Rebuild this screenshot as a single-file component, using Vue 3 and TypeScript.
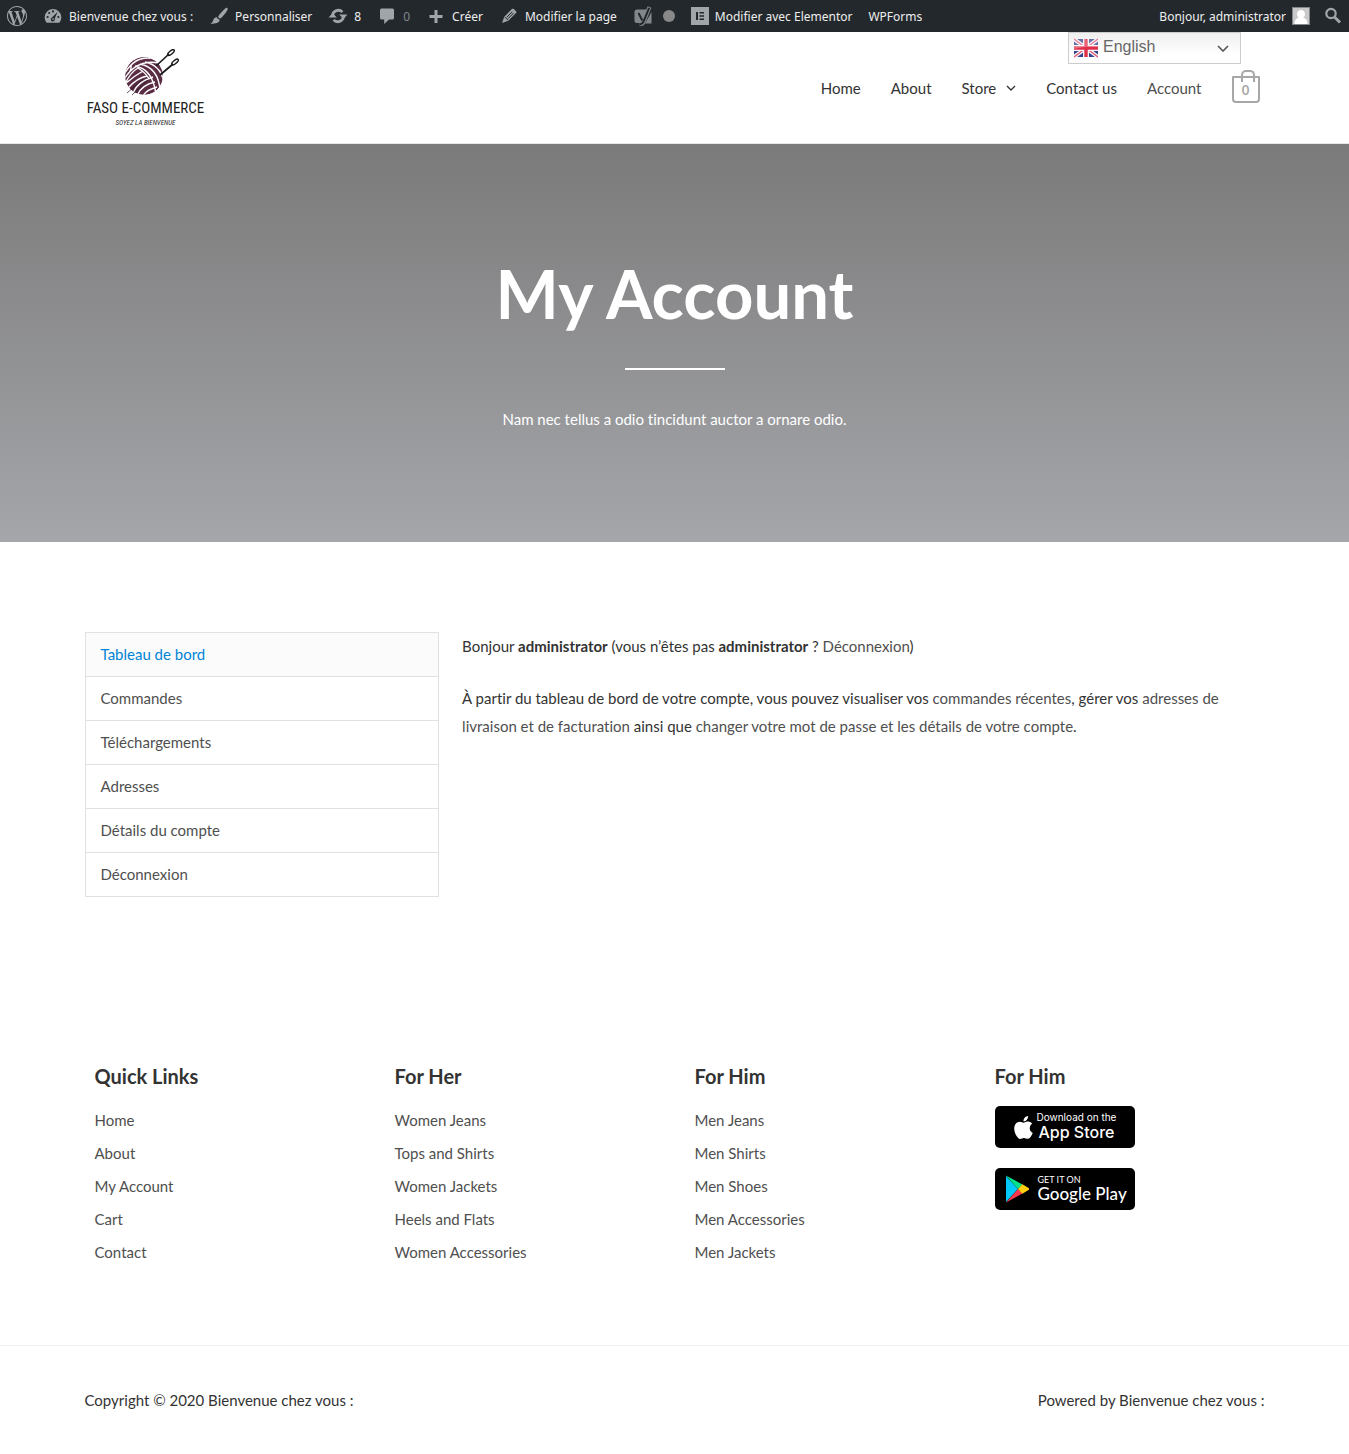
<script setup lang="ts">
interface FooterColumn {
  title: string
  links: string[]
}

const accountLinks: string[] = [
  'Tableau de bord',
  'Commandes',
  'Téléchargements',
  'Adresses',
  'Détails du compte',
  'Déconnexion',
]

const footerColumns: FooterColumn[] = [
  { title: 'Quick Links', links: ['Home', 'About', 'My Account', 'Cart', 'Contact'] },
  { title: 'For Her', links: ['Women Jeans', 'Tops and Shirts', 'Women Jackets', 'Heels and Flats', 'Women Accessories'] },
  { title: 'For Him', links: ['Men Jeans', 'Men Shirts', 'Men Shoes', 'Men Accessories', 'Men Jackets'] },
]
</script>

<template>
  <div class="page">
    <nav class="adminbar" aria-label="Administration">
      <div class="group">
        <a href="#" class="wp" aria-label="WordPress">
          <svg width="20" height="20" viewBox="0 0 24 24" fill="currentColor"><path d="M21.469 6.825c.84 1.537 1.318 3.3 1.318 5.175 0 3.979-2.156 7.456-5.363 9.325l3.295-9.527c.615-1.54.82-2.771.82-3.864 0-.405-.026-.78-.07-1.11m-7.981.105c.647-.03 1.232-.105 1.232-.105.582-.075.514-.93-.067-.899 0 0-1.755.135-2.88.135-1.064 0-2.85-.15-2.85-.15-.585-.03-.661.855-.075.885 0 0 .54.061 1.125.09l1.68 4.605-2.37 7.08L5.354 6.9c.649-.03 1.234-.1 1.234-.1.585-.075.516-.93-.065-.896 0 0-1.746.138-2.874.138-.2 0-.438-.008-.69-.015C4.911 3.15 8.235 1.215 12 1.215c2.809 0 5.365 1.072 7.286 2.833-.046-.003-.091-.009-.141-.009-1.06 0-1.812.923-1.812 1.914 0 .89.513 1.643 1.06 2.531.411.72.89 1.643.89 2.977 0 .915-.354 1.994-.821 3.479l-1.075 3.585-3.9-11.61.001.014zM12 22.784c-1.059 0-2.081-.153-3.048-.437l3.237-9.406 3.315 9.087c.024.053.05.101.078.149-1.12.393-2.325.609-3.582.609M1.211 12c0-1.564.336-3.05.935-4.39L7.29 21.709C3.694 19.96 1.212 16.271 1.211 12M12 0C5.385 0 0 5.385 0 12s5.385 12 12 12 12-5.385 12-12S18.615 0 12 0" /></svg>
        </a>
        <a href="#">
          <svg width="20" height="20" viewBox="0 0 20 20"><path fill="currentColor" d="M3.4 16.4A8.3 8.3 0 1 1 16.6 16.4C15.6 16.8 4.4 16.8 3.4 16.4Z" /><g fill="#23282d"><circle cx="10" cy="5.4" r="1.1" /><circle cx="6.2" cy="7" r="1.1" /><circle cx="4.6" cy="11" r="1.1" /><circle cx="15.4" cy="11" r="1.1" /><path d="M14.6 5.8 11.8 12.6A2.1 2.1 0 1 1 9 11.4Z" /></g><circle cx="10" cy="13.1" r=".9" fill="currentColor" /></svg>
          <span>Bienvenue chez vous :</span>
        </a>
        <a href="#">
          <svg width="20" height="20" viewBox="0 0 20 20" fill="currentColor"><path d="M18.3 2.1c.7.600.5 1.500-.3 2.700-1.500 2.300-4.200 5.700-5.800 7.100-.8.700-1.600.600-2.300 0s-.9-1.500-.1-2.500c1.500-2 4.200-5 6.100-6.600 1.100-.9 1.900-1.200 2.400-.7zM8 11.200c.3 1.300 1.100 2.100 2.600 2.400.2 2.900-3.600 4.800-9.300 4 1.800-.5 2.300-1.600 2.900-3.300.6-2 1.900-3.200 3.800-3.100z" /></svg>
          <span>Personnaliser</span>
        </a>
        <a href="#">
          <svg width="20" height="20" viewBox="0 0 20 20"><path fill="none" stroke="currentColor" stroke-width="2.800" d="M4.600 9.500A5.600 5.600 0 0 1 14.400 6.200M15.400 10.500A5.600 5.600 0 0 1 5.600 13.800" /><path fill="currentColor" d="M11.200 8.600h8.200l-4 4.400zM8.800 11.400H.6l4-4.400z" /></svg>
          <span>8</span>
        </a>
        <a href="#" class="muted">
          <svg width="20" height="20" viewBox="0 0 20 20" fill="currentColor"><path d="M4.500 2.500h11a1.500 1.500 0 0 1 1.500 1.500v8a1.500 1.500 0 0 1-1.500 1.500H12L7.200 18v-4.500H4.500A1.500 1.500 0 0 1 3 12V4a1.500 1.500 0 0 1 1.500-1.500z" /></svg>
          <span>0</span>
        </a>
        <a href="#">
          <svg width="20" height="20" viewBox="0 0 20 20" fill="currentColor"><path d="M8.500 4h3v5h5v3h-5v5h-3v-5h-5V9h5z" /></svg>
          <span>Créer</span>
        </a>
        <a href="#">
          <svg width="20" height="20" viewBox="0 0 20 20"><path fill="currentColor" d="M12.900 3c.5-.5 1.300-.5 1.800 0l2.300 2.300c.5.500.5 1.300 0 1.800L9.300 14.700 3 17l2.300-6.300z" /><path fill="none" stroke="#23282d" stroke-width="1" d="M7.700 11.300 13.300 5.700M9 12.700 14.600 7M6 11.200l3 3" /></svg>
          <span>Modifier la page</span>
        </a>
        <a href="#" class="seo" aria-label="SEO">
          <svg width="20" height="20" viewBox="0 0 20 20"><path fill="#82878c" d="M4 3.500h10.500L9.500 17H4a2.500 2.500 0 0 1-2.500-2.500V6A2.500 2.500 0 0 1 4 3.500zM18.500 6v11.500H12z" /><path fill="none" stroke="#82878c" stroke-width="4" d="M16.500 1 10.800 15.600Q9.600 18.400 6.500 18.400" /><path fill="none" stroke="#23282d" stroke-width="2" d="M5.500 7 9.300 14.500M16.200 1.800 10.600 15.400Q9.500 18.200 6.500 18.400" /></svg>
          <i class="dot"></i>
        </a>
        <a href="#" class="elementor">
          <svg width="18" height="18" viewBox="0 0 18 18"><path fill="currentColor" d="M0 0h18v18H0z" /><path fill="#23282d" d="M5 5h2v8H5zM8.500 5H13v1.500H8.500zM8.500 8.200H13v1.500H8.500zM8.500 11.500H13V13H8.500z" /></svg>
          <span>Modifier avec Elementor</span>
        </a>
        <a href="#"><span>WPForms</span></a>
      </div>
      <div class="group account-tools">
        <a href="#" class="user">
          <span>Bonjour, administrator</span>
          <svg width="18" height="18" viewBox="0 0 18 18"><path fill="#82878c" d="M0 0h18v18H0z" /><path fill="#c9c9c9" d="M1 1h16v16H1z" /><path fill="#fff" d="M9 3c2.500 0 4 1.700 4 4 0 1.500-.8 3-1.800 3.800 2.800.6 4 2.200 4.300 6.200h-13c.3-4 1.500-5.600 4.300-6.200C5.800 10 5 8.500 5 7c0-2.300 1.500-4 4-4z" /></svg>
        </a>
        <a href="#" aria-label="Rechercher">
          <svg width="20" height="20" viewBox="0 0 20 20" fill="none" stroke="currentColor"><circle cx="8" cy="7.500" r="4.700" stroke-width="2.200" /><path stroke-width="3" d="m11.500 11 5.500 5.500" /></svg>
        </a>
      </div>
    </nav>

    <header class="header">
      <div class="container header-row">
        <a href="#" class="logo">
          <svg width="58" height="48" viewBox="0 0 58 48">
            <defs><clipPath id="ball"><circle cx="21" cy="27" r="19" /></clipPath></defs>
            <g clip-path="url(#ball)">
              <circle cx="21" cy="27" r="19" fill="#5a2d45" />
              <g fill="none" stroke="#fff" stroke-width="1.400">
                <path d="M2 24Q13 5 32 10M2 29Q14 10 36 14M12 17Q30 20 33 46M17 15Q36 19 37 42M22 13Q38 16 41 34M3 33Q8 23 15 19Q23 24 26 30M2 35Q11 27 20 22M5 39Q14 29 24 27M14 47Q18 36 32 33M20 47Q23 41 34 38M10 44Q14 33 30 28M8 16Q9 22 3 27" />
              </g>
            </g>
            <path fill="none" stroke="#1c1a1c" stroke-width="1.700" d="M33 17 46 5M37 26 50 15" />
            <path fill="none" stroke="#1c1a1c" stroke-width=".7" d="M4 44 20 30M9 46 25 31" />
            <ellipse cx="48" cy="3.500" rx="4" ry="1.600" transform="rotate(-40 48 3.500)" fill="none" stroke="#1c1a1c" stroke-width="1.500" />
            <ellipse cx="52" cy="13" rx="4" ry="1.600" transform="rotate(-40 52 13)" fill="none" stroke="#1c1a1c" stroke-width="1.500" />
          </svg>
          <span class="logo-name">FASO E-COMMERCE</span>
          <span class="logo-tag">SOYEZ LA BIENVENUE</span>
        </a>
        <nav class="menu" aria-label="Menu principal">
          <a href="#">Home</a>
          <a href="#">About</a>
          <a href="#" class="has-sub">Store
            <svg width="10" height="6" viewBox="0 0 10 6" fill="none" stroke="currentColor" stroke-width="1.300"><path d="m1 1 4 4 4-4" /></svg>
          </a>
          <a href="#">Contact us</a>
          <a href="#" class="current">Account</a>
          <a href="#" class="cart" aria-label="Panier"><span>0</span></a>
        </nav>
      </div>
      <button type="button" class="lang">
        <svg width="24" height="24" viewBox="0 0 24 24">
          <path fill="#33418c" d="M0 3h24v18H0z" />
          <path fill="none" stroke="#f3f0f5" stroke-width="4" d="m0 3 24 18M24 3 0 21" />
          <path fill="none" stroke="#e0526a" stroke-width="1.300" d="m0 3 24 18M24 3 0 21" />
          <path fill="none" stroke="#f8f5f8" stroke-width="6" d="M12 3v18M0 12h24" />
          <path fill="none" stroke="#de2f4b" stroke-width="3.400" d="M12 3v18M0 12h24" />
          <path fill="#fff" fill-opacity=".25" d="M0 3h24v8Q12 10 0 13z" />
        </svg>
        <span>English</span>
        <svg class="chevron" width="12" height="8" viewBox="0 0 12 8" fill="none" stroke="#555" stroke-width="1.600"><path d="m1 2 5 5 5-5" /></svg>
      </button>
    </header>

    <section class="hero">
      <h1>My Account</h1>
      <hr />
      <p>Nam nec tellus a odio tincidunt auctor a ornare odio.</p>
    </section>

    <main class="container account">
      <nav class="account-nav" aria-label="Compte">
        <a v-for="(label, i) in accountLinks" :key="label" href="#" :class="{ active: i === 0 }">{{ label }}</a>
      </nav>
      <div class="account-body">
        <p>Bonjour <strong>administrator</strong> (vous n’êtes pas <strong>administrator</strong>&nbsp;? <a href="#">Déconnexion</a>)</p>
        <p>À partir du tableau de bord de votre compte, vous pouvez visualiser vos <a href="#">commandes récentes</a>, gérer vos <a href="#">adresses de livraison et de facturation</a> ainsi que <a href="#">changer votre mot de passe et les détails de votre compte</a>.</p>
      </div>
    </main>

    <footer>
      <div class="columns">
        <section v-for="column in footerColumns" :key="column.title" class="column">
          <h2>{{ column.title }}</h2>
          <ul>
            <li v-for="link in column.links" :key="link"><a href="#">{{ link }}</a></li>
          </ul>
        </section>
        <section class="column">
          <h2>For Him</h2>
          <a href="#" class="badge apple">
            <svg width="19" height="23" viewBox="2 0 20 24" fill="#fff"><path d="M12.152 6.896c-.948 0-2.415-1.078-3.96-1.040-2.040.027-3.910 1.183-4.961 3.014-2.117 3.675-.546 9.103 1.519 12.090 1.013 1.454 2.208 3.090 3.792 3.039 1.520-.065 2.090-.987 3.935-.987 1.831 0 2.350.987 3.960.948 1.637-.026 2.676-1.480 3.676-2.948 1.156-1.688 1.636-3.325 1.662-3.415-.039-.013-3.182-1.221-3.220-4.857-.026-3.040 2.480-4.494 2.597-4.559-1.429-2.090-3.623-2.324-4.390-2.376-2-.156-3.675 1.090-4.610 1.090zM15.530 3.830c.843-1.012 1.400-2.427 1.245-3.830-1.207.052-2.662.805-3.532 1.818-.780.896-1.454 2.338-1.273 3.714 1.338.104 2.715-.688 3.559-1.701" /></svg>
            <span class="badge-text"><small>Download on the</small><b>App Store</b></span>
          </a>
          <a href="#" class="badge google">
            <svg width="24" height="28" viewBox="0 0 24 28"><path fill="#00c8f8" d="M1 1v26l12-13z" /><path fill="#00e28a" d="M1 .500 17.500 9.500 13 14z" /><path fill="#f8384f" d="M1 27.500 17.500 18.500 13 14z" /><path fill="#ffcf10" d="M17.300 9.300 24 13.200q.6.800 0 1.600l-6.700 3.900L13 14z" /></svg>
            <span class="badge-text"><small>GET IT ON</small><b>Google Play</b></span>
          </a>
        </section>
      </div>
      <div class="legal">
        <div class="container legal-row">
          <span>Copyright © 2020 Bienvenue chez vous :</span>
          <span>Powered by Bienvenue chez vous :</span>
        </div>
      </div>
    </footer>
  </div>
</template>

<style>
body {
  margin: 0;
  background: #fff;
}
</style>

<style scoped>
* {
  box-sizing: border-box;
}

.page {
  font: 15px/28px Lato, "Open Sans", sans-serif;
  font-variant-ligatures: none;
  color: #333;
}

a {
  color: #4f4f4f;
  text-decoration: none;
}

.container {
  max-width: 1180px;
  margin: 0 auto;
}

.adminbar {
  display: flex;
  justify-content: space-between;
  height: 32px;
  padding: 0 6px 0 7px;
  background: #23282d;
  font-family: "Noto Sans", "Open Sans", sans-serif;
  font-size: 12px;
  line-height: 30px;
}

.group {
  display: flex;
  gap: 16px;
}

.account-tools {
  gap: 13px;
}

.adminbar a {
  display: flex;
  align-items: center;
  gap: 6px;
  color: #eee;
  white-space: nowrap;
}

.adminbar span {
  padding-top: 2px;
}

.adminbar svg {
  flex: none;
  color: #a0a5aa;
}

.adminbar .muted span {
  color: #82878c;
}

.adminbar .seo {
  gap: 10px;
}

.dot {
  width: 12px;
  height: 12px;
  border-radius: 50%;
  background: #888;
}

.header {
  position: relative;
  border-bottom: 1px solid #e6e6e6;
}

.header-row {
  display: flex;
  justify-content: space-between;
  align-items: center;
  height: 111px;
}

.logo {
  display: flex;
  flex-direction: column;
  align-items: center;
  width: 122px;
  padding-top: 2px;
  color: #222;
  white-space: nowrap;
}

.logo svg {
  margin: 0 0 1px 12px;
}

.logo-name {
  font: 15px/20px "Roboto Condensed", "DejaVu Sans Condensed", sans-serif;
}

.logo-tag {
  font: italic 7px/10px "Roboto Condensed", "Open Sans", sans-serif;
}

.menu {
  display: flex;
  align-items: center;
  gap: 30px;
  padding-right: 5px;
}

.menu a {
  color: #333;
}

.menu .current {
  color: #4f4f4f;
}

.has-sub {
  display: flex;
  align-items: center;
  gap: 10px;
}

.menu .cart {
  position: relative;
  width: 28px;
  height: 27px;
  margin-top: 4px;
  border: 2px solid #a7a7a7;
  border-radius: 1px 1px 4px 4px;
  color: #a7a7a7;
  font-weight: 700;
  font-size: 13px;
  line-height: 24px;
  text-align: center;
}

.cart::before {
  content: "";
  position: absolute;
  left: 7px;
  top: -8px;
  width: 10px;
  height: 10px;
  border: 2px solid #a7a7a7;
  border-bottom: 0;
  border-radius: 5px 5px 0 0;
}

.lang {
  position: absolute;
  top: 0;
  right: 108px;
  display: flex;
  align-items: center;
  gap: 5px;
  width: 173px;
  height: 32px;
  padding: 0 11px 0 5px;
  border: 1px solid #ccc;
  background: linear-gradient(#efefef, #fff 70%);
  color: #666;
  font: 16px/26px "Liberation Sans", Arial, sans-serif;
}

.lang span {
  padding-bottom: 3px;
}

.chevron {
  margin-left: auto;
}

.hero {
  display: flex;
  flex-direction: column;
  align-items: center;
  padding: 109px 20px;
  background: linear-gradient(#7a7a7a, #a5a6aa);
  color: #fff;
}

.hero h1 {
  margin: 0;
  font-size: 67px;
  line-height: 80px;
}

.hero hr {
  width: 100px;
  margin: 35px 0;
  border: 0;
  border-top: 2px solid #fff;
}

.hero p {
  margin: 0;
}

.account {
  display: flex;
  justify-content: space-between;
  align-items: flex-start;
  padding: 90px 0 165px;
}

.account-nav {
  display: flex;
  flex-direction: column;
  width: 30%;
  border: 1px solid #e1e1e1;
  border-bottom: 0;
}

.account-nav a {
  padding: 7px 15px 8px;
  border-bottom: 1px solid #e1e1e1;
}

.account-nav .active {
  background: #fbfbfb;
  color: #0084d6;
}

.account-body {
  width: 68%;
}

.account-body p {
  margin: 0 0 24px;
}

.columns {
  display: grid;
  grid-template-columns: repeat(4, 1fr);
  max-width: 1200px;
  margin: 0 auto;
  padding-bottom: 74px;
}

.column {
  padding: 0 20px;
}

.column h2 {
  margin: 0 0 16px;
  font-size: 20px;
  line-height: 28px;
}

.column ul {
  margin: 0;
  padding: 0;
  list-style: none;
}

.column li {
  margin-bottom: 5px;
}

.badge {
  display: flex;
  align-items: center;
  width: 140px;
  height: 42px;
  margin-bottom: 20px;
  border-radius: 5px;
  background: #000;
  color: #fff;
  white-space: nowrap;
}

.apple {
  gap: 4px;
  padding-left: 19px;
}

.google {
  gap: 9px;
  padding-left: 10px;
}

.badge-text {
  display: flex;
  flex-direction: column;
  padding-bottom: 2px;
}

.apple .badge-text {
  align-items: center;
}

.badge small {
  font: 10px/12px Inter, sans-serif;
}

.badge b {
  font: 500 16px/18px Inter, sans-serif;
}

.google small {
  font: 9px/12px Lato, sans-serif;
}

.google b {
  font: 500 17px/16px Lato, sans-serif;
}

.legal {
  border-top: 1px solid #eee;
  padding: 40px 0;
}

.legal-row {
  display: flex;
  justify-content: space-between;
}
</style>
